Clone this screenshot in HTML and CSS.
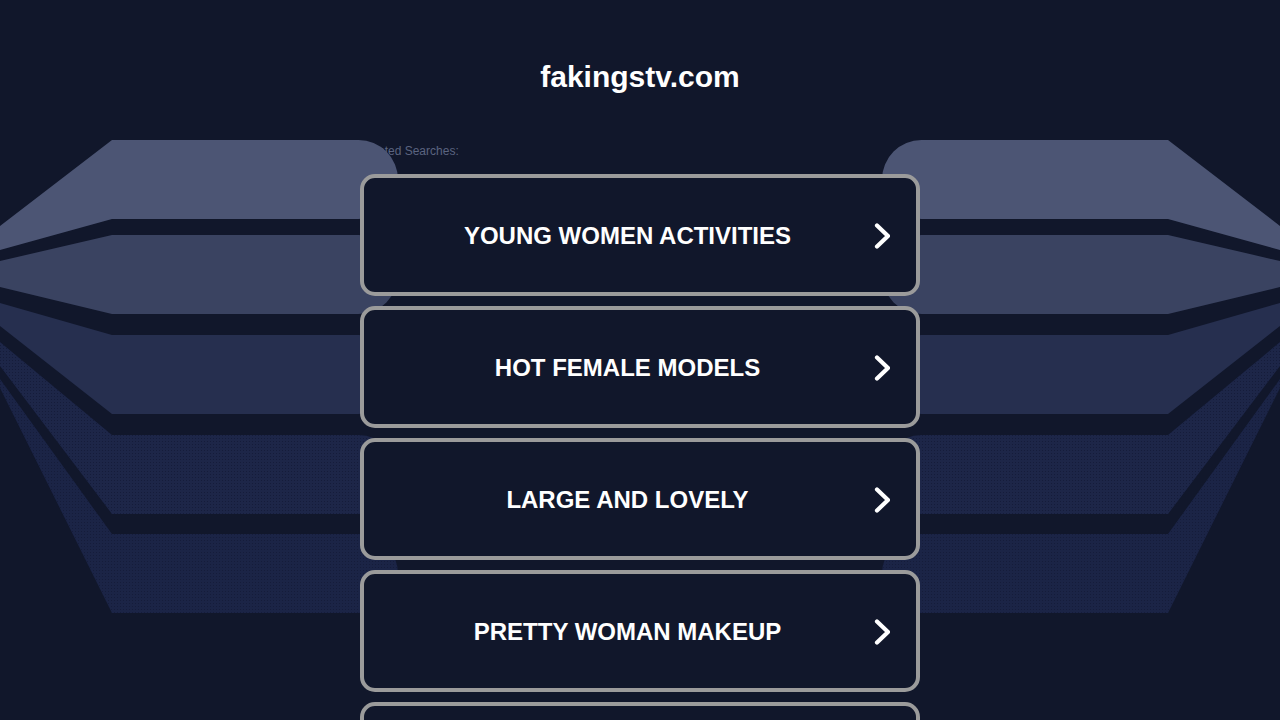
FILE: index.html
```html
<!DOCTYPE html>
<html lang="en">
<head>
<meta charset="utf-8">
<title>fakingstv.com</title>
<link rel="stylesheet" href="styles.css">
</head>
<body>
<svg class="backdrop" viewBox="0 0 1280 720" width="1280" height="720" aria-hidden="true">
  <defs>
    <pattern id="dots" width="3" height="3" patternUnits="userSpaceOnUse">
      <rect x="0" y="0" width="1" height="1" fill="#151c3a"/>
    </pattern>
    <g id="fan">
      <path fill="#4c5574" d="M0 226 L112 140 L358.5 140 A39.5 39.5 0 0 1 358.5 219 L112 219 L0 250 Z"/>
      <path fill="#3a4361" d="M0 261 L112 235 L358.5 235 A39.5 39.5 0 0 1 358.5 314 L112 314 L0 287 Z"/>
      <path fill="#262f4f" d="M0 303 L112 335 L358.5 335 A39.5 39.5 0 0 1 358.5 414 L112 414 L0 326 Z"/>
      <path fill="#1d2648" d="M0 342 L112 435 L358.5 435 A39.5 39.5 0 0 1 358.5 514 L112 514 L0 366 Z"/>
      <path fill="url(#dots)" d="M0 342 L112 435 L358.5 435 A39.5 39.5 0 0 1 358.5 514 L112 514 L0 366 Z"/>
      <path fill="#1b2446" d="M0 379 L112 534 L358.5 534 A39.5 39.5 0 0 1 358.5 613 L112 613 L0 388 Z"/>
      <path fill="url(#dots)" d="M0 379 L112 534 L358.5 534 A39.5 39.5 0 0 1 358.5 613 L112 613 L0 388 Z"/>
    </g>
  </defs>
  <use href="#fan"/>
  <use href="#fan" transform="matrix(-1 0 0 1 1280 0)"/>
</svg>

<header class="site-header">
  <h1 class="domain">fakingstv.com</h1>
</header>

<main class="searches">
  <p class="searches-label">Related Searches:</p>
  <ul class="search-list">
    <li><a class="search-card" href="#"><span class="search-text">YOUNG WOMEN ACTIVITIES</span><svg class="chevron" viewBox="0 0 24 30" width="24" height="30"><path d="M11 4.5 L22 15 L11 25.5"/></svg></a></li>
    <li><a class="search-card" href="#"><span class="search-text">HOT FEMALE MODELS</span><svg class="chevron" viewBox="0 0 24 30" width="24" height="30"><path d="M11 4.5 L22 15 L11 25.5"/></svg></a></li>
    <li><a class="search-card" href="#"><span class="search-text">LARGE AND LOVELY</span><svg class="chevron" viewBox="0 0 24 30" width="24" height="30"><path d="M11 4.5 L22 15 L11 25.5"/></svg></a></li>
    <li><a class="search-card" href="#"><span class="search-text">PRETTY WOMAN MAKEUP</span><svg class="chevron" viewBox="0 0 24 30" width="24" height="30"><path d="M11 4.5 L22 15 L11 25.5"/></svg></a></li>
    <li><a class="search-card" href="#"><span class="search-text">BEAUTIFUL WOMEN PHOTOS</span><svg class="chevron" viewBox="0 0 24 30" width="24" height="30"><path d="M11 4.5 L22 15 L11 25.5"/></svg></a></li>
  </ul>
</main>
</body>
</html>
```

FILE: styles.css
```css
html, body {
  margin: 0;
  padding: 0;
}

body {
  position: relative;
  height: 720px;
  background: #11172b;
  font-family: "Liberation Sans", Arial, sans-serif;
  color: #ffffff;
  overflow: hidden;
}

.backdrop {
  position: absolute;
  top: 0;
  left: 0;
  z-index: 1;
  pointer-events: none;
}

.site-header {
  padding-top: 59px;
  text-align: center;
}

.domain {
  margin: 0;
  font-size: 30px;
  line-height: 36px;
  font-weight: 700;
  color: #ffffff;
}

.searches {
  width: 560px;
  margin: 0 auto;
  padding-top: 48px;
}

.searches-label {
  margin: 0 0 15px 0;
  font-size: 12px;
  line-height: 16px;
  color: #5b6480;
}

.search-list {
  list-style: none;
  margin: 0;
  padding: 0;
  display: flex;
  flex-direction: column;
  gap: 10px;
}

.search-card {
  position: relative;
  z-index: 2;
  display: flex;
  align-items: center;
  box-sizing: border-box;
  height: 122px;
  padding: 2px 26px 0 25px;
  background: #11172b;
  border: 4px solid #9b9b9b;
  border-radius: 15px;
  text-decoration: none;
  color: #ffffff;
}

.search-text {
  flex: 1;
  text-align: center;
  font-size: 24px;
  line-height: 28px;
  font-weight: 700;
}

.chevron {
  flex: none;
  fill: none;
  stroke: #ffffff;
  stroke-width: 4.2;
  stroke-linecap: round;
  stroke-linejoin: round;
}
```
